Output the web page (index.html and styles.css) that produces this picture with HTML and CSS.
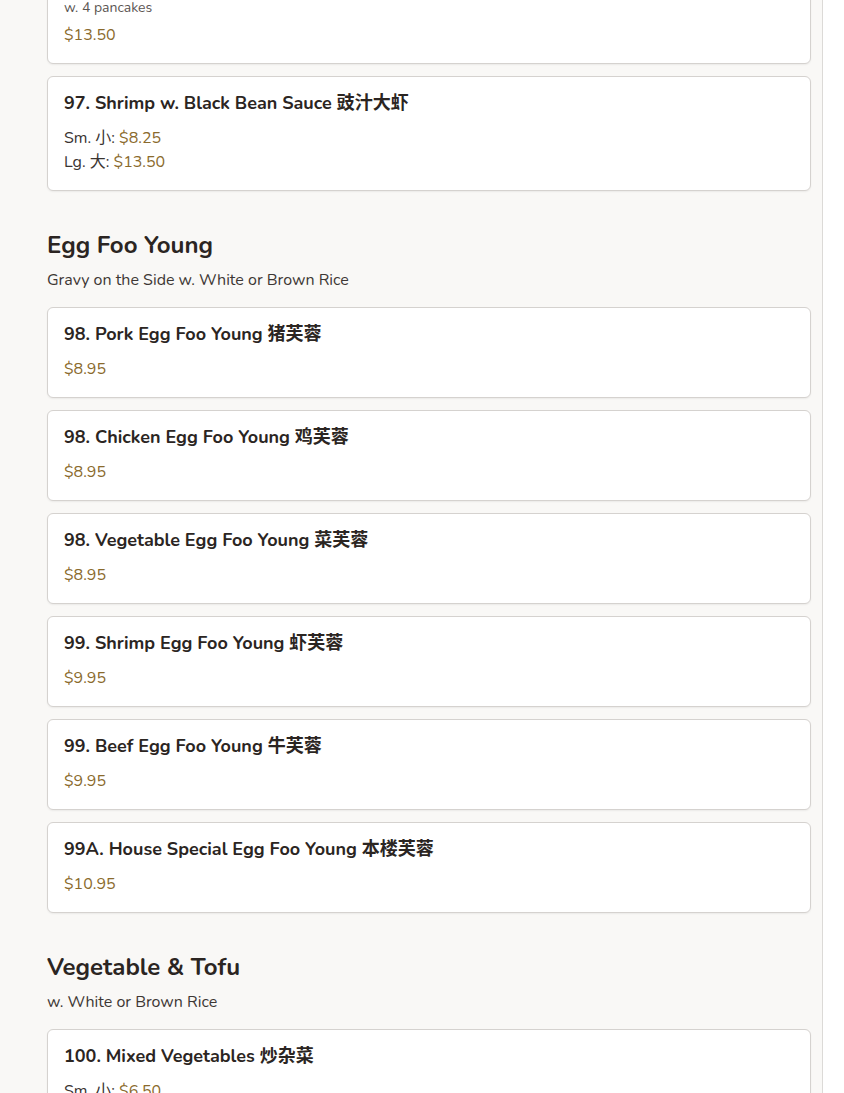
FILE: index.html
```html
<!DOCTYPE html>
<html lang="en">
<head>
<meta charset="utf-8">
<title>Menu</title>
<link rel="stylesheet" href="styles.css">
</head>
<body>
<main class="page">
  <div class="scroll">
    <section class="section first">
      <div class="card">
        <h3 class="item-title">96. Moo Shu Shrimp 木须虾</h3>
        <p class="item-desc">w. 4 pancakes</p>
        <div class="prices"><span class="price">$13.50</span></div>
      </div>
      <div class="card">
        <h3 class="item-title">97. Shrimp w. Black Bean Sauce 豉汁大虾</h3>
        <div class="prices">
          <div>Sm. 小: <span class="price">$8.25</span></div>
          <div>Lg. 大: <span class="price">$13.50</span></div>
        </div>
      </div>
    </section>

    <section class="section">
      <h2 class="section-title">Egg Foo Young</h2>
      <p class="section-desc">Gravy on the Side w. White or Brown Rice</p>
      <div class="card">
        <h3 class="item-title">98. Pork Egg Foo Young 猪芙蓉</h3>
        <div class="prices"><span class="price">$8.95</span></div>
      </div>
      <div class="card">
        <h3 class="item-title">98. Chicken Egg Foo Young 鸡芙蓉</h3>
        <div class="prices"><span class="price">$8.95</span></div>
      </div>
      <div class="card">
        <h3 class="item-title">98. Vegetable Egg Foo Young 菜芙蓉</h3>
        <div class="prices"><span class="price">$8.95</span></div>
      </div>
      <div class="card">
        <h3 class="item-title">99. Shrimp Egg Foo Young 虾芙蓉</h3>
        <div class="prices"><span class="price">$9.95</span></div>
      </div>
      <div class="card">
        <h3 class="item-title">99. Beef Egg Foo Young 牛芙蓉</h3>
        <div class="prices"><span class="price">$9.95</span></div>
      </div>
      <div class="card">
        <h3 class="item-title">99A. House Special Egg Foo Young 本楼芙蓉</h3>
        <div class="prices"><span class="price">$10.95</span></div>
      </div>
    </section>

    <section class="section">
      <h2 class="section-title">Vegetable &amp; Tofu</h2>
      <p class="section-desc">w. White or Brown Rice</p>
      <div class="card">
        <h3 class="item-title">100. Mixed Vegetables 炒杂菜</h3>
        <div class="prices">
          <div>Sm. 小: <span class="price">$6.50</span></div>
          <div>Lg. 大: <span class="price">$11.50</span></div>
        </div>
      </div>
      <div class="card">
        <h3 class="item-title">101. Broccoli w. Garlic Sauce 鱼香芥兰</h3>
        <div class="prices">
          <div>Sm. 小: <span class="price">$6.50</span></div>
          <div>Lg. 大: <span class="price">$11.50</span></div>
        </div>
      </div>
    </section>
  </div>
</main>
</body>
</html>
```

FILE: styles.css
```css
html, body {
  margin: 0;
  padding: 0;
  background: #ffffff;
}

body {
  font-family: "Nunito", "Lato", "Noto Sans CJK SC", sans-serif;
  color: #2b2522;
  height: 1093px;
  overflow: hidden;
}

.page {
  width: 764px;
  padding: 0 11px 0 47px;
  background: #f9f8f6;
  border-right: 1px solid #dcdad7;
  min-height: 1093px;
}

.scroll {
  margin-top: -48px;
}

.section {
  margin-top: 40px;
}

.section.first {
  margin-top: 0;
}

.section-title {
  font-size: 24px;
  font-weight: 700;
  line-height: 1.2;
  margin: 0 0 8px;
  color: #2b2522;
}

.section-desc {
  font-size: 16px;
  line-height: 24px;
  margin: 0 0 15px;
  color: #3d3734;
}

.card {
  background: #ffffff;
  border: 1px solid #d5d2cf;
  border-radius: 6px;
  padding: 15px 16px 16px;
  margin-bottom: 12px;
  box-shadow: 0 1px 2px rgba(0, 0, 0, 0.06);
}

.item-title {
  font-size: 18px;
  font-weight: 700;
  line-height: 22px;
  margin: 0 0 12px;
  color: #2b2522;
}

.item-desc {
  font-size: 14px;
  line-height: 21px;
  margin: -5px 0 5px;
  color: #5b5552;
}

.prices {
  margin-top: 4px;
  font-size: 16px;
  line-height: 24px;
  color: #3a3431;
}

.price {
  color: #8a6a2c;
}
```
